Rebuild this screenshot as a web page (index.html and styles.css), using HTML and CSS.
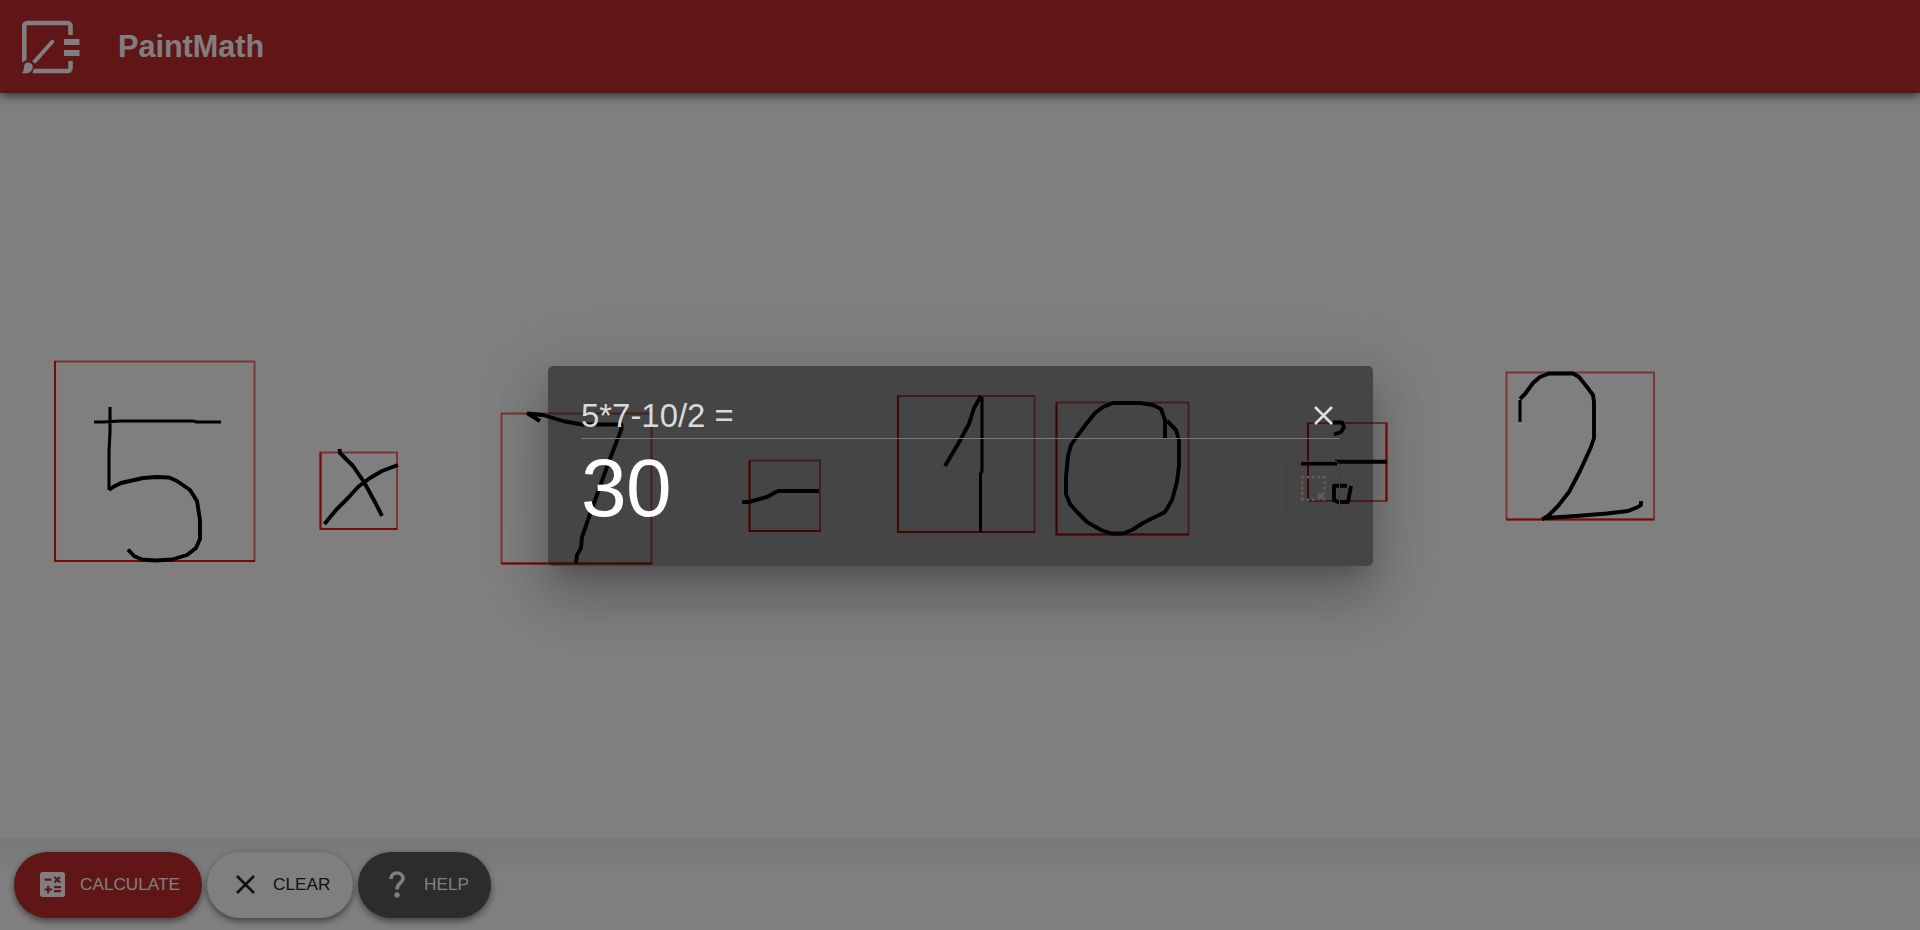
FILE: index.html
```html
<!DOCTYPE html>
<html lang="en">
<head>
<meta charset="utf-8">
<title>PaintMath</title>
<link rel="stylesheet" href="styles.css">
</head>
<body>
<div class="app">
  <header class="header">
    <svg class="logo" viewBox="20 18 62 56" width="62" height="56">
      <path class="logo-frame" d="M24.300 63V25a3 3 0 0 1 3-3H67.500a3 3 0 0 1 3 3V34M70.500 60V67a3 3 0 0 1-3 3H31"/>
      <path class="logo-fill" d="M64 38h15.500v6H64zM64 49h15.500v6H64z"/>
      <path class="logo-back" d="M20 62.500l7-4 8 5.500-3 9.500H20z"/>
      <path class="logo-fill" d="M51 39.300q2-1.200 3.200.4q.3 1.300-.5 2.300L36 62q-1.800.8-3.800-1.700z"/>
      <path class="logo-fill" d="M26 61.800q3.500-1.300 6 1.500 1.900 3.400-.6 6.400-3.500 4.200-9.800 2 2.500-1.600 2.300-5 .1-3.500 2.100-4.900z"/>
    </svg>
    <h1 class="title">PaintMath</h1>
  </header>
  <main class="board">
    <svg class="drawing" viewBox="0 93 1920 746" width="1920" height="746">
      <g class="bounds">
        <path d="M55 562V361.500H254.500V561H55M320.500 529V452.500H397V529H320.500M501.500 563.500V413.500H651.500V563.500H501.500M749.500 531V460.500H820V531H749.500M898 532V396H1034.500V532H898M1056.500 534.500V402.500H1188.500V534.500H1056.500M1308 501V423H1386.500V501H1308M1506.500 519.500V372.500H1654V519.500H1506.500"/>
        <path class="bounds-strong" d="M55 361V561H255M320.500 452V529H397M501 563.500H652M749.500 461V531H820.500M898 396V532H1035M1056.500 403V534.500H1189M1308 423V501M1386.500 423V501M1506 519.500H1654"/>
      </g>
      <g class="ink">
        <path class="thin" d="M94 422H103L120 421H193L197 422H221M110 407V432L109 451V490"/>
        <path d="M109 490L113 487 121 483 143 478 157 477 169 477.500 177 481 190 490 197 501 200 520 200 539 196 548 187 555 172 559.500 155 560.500 142 559.500 134 556 128 549.500"/>
        <path d="M339.500 449L340 453 353 466 364 482 376 504 382 516M324.500 524L336 510 348 498 358 487 370 478 382 471 398 465"/>
        <path d="M527 413L540 421M527 413.500L543 415 563 421 582 424.500H621.500V429L608 464 588 520 582 537 581 548 577 555 576 563M742 502H749L767 497 778 491H819"/>
        <path d="M945 466L958 444 969 424 974 408 981 396"/>
        <path class="thin" d="M982 397V471L980.500 474V532"/>
        <path d="M1165 439V420L1161 409 1153 405 1140 403H1113L1103 407 1095 413 1087 423 1078 435 1071 445 1068 456 1066 477 1066 494 1070 504 1077 512 1087 522 1101 530 1111 533.500H1123L1132 530 1143 523 1165 512 1172 500 1177 482 1179 465V440L1176 430 1167 421"/>
        <path d="M1333 422.500H1342L1344 427 1341 432 1334 434.500M1301 463.500H1337M1335 461.700H1387M1347 485.700H1334V500L1338 502 1348 502 1351 486"/>
        <path class="thin" d="M1520 422V400"/>
        <path d="M1520 399L1525 394 1533 383 1540 377 1549 373.500H1573L1579 377 1587 387 1593 395 1594 402V438L1591 447 1580 471 1569 492 1558 506 1548 516 1542 519.500M1545 518L1576 516 1607 513.500 1628 511 1638 507 1641 505V501"/>
      </g>
    </svg>
  </main>
  <footer class="toolbar">
    <button class="btn btn-calculate">
      <svg class="btn-icon" viewBox="0 0 25 25" width="25" height="25">
        <rect width="25" height="25" rx="2.700" fill="#fff"/>
        <path d="M4.500 7.600h7M14.500 5l5.500 5.500M20 5l-5.500 5.500M4.500 17.500h7.500M8.200 13.700v7.500M14 15.200h7M14 19.200h7" stroke="#c12d2d" stroke-width="2.200"/>
      </svg>
      <span>CALCULATE</span>
    </button>
    <button class="btn btn-clear">
      <svg class="btn-icon" viewBox="0 0 19 19" width="19" height="19"><path d="M1 1l17 17M18 1L1 18" stroke="#222" stroke-width="2.600"/></svg>
      <span>CLEAR</span>
    </button>
    <button class="btn btn-help">
      <svg class="btn-icon" viewBox="0 0 16 27" width="16" height="27"><path d="M2 8C2 4 4.600 2 8 2s6 2.400 6 5.500C14 12 8 12 8 18.500" fill="none" stroke="#fff" stroke-width="3.600"/><circle cx="8" cy="24" r="2.700" fill="#fff"/></svg>
      <span>HELP</span>
    </button>
  </footer>
</div>
<div class="overlay">
  <section class="dialog">
    <div class="dialog-head">
      <span>5*7-10/2 =</span>
      <svg class="close" viewBox="0 0 19 19" width="19" height="19"><path d="M1 1l17 17M18 1L1 18" stroke="#e0e0e0" stroke-width="2.500"/></svg>
    </div>
    <div class="dialog-body">
      <span class="result">30</span>
      <span class="copy"><svg viewBox="0 0 25 25" width="25" height="25"><path d="M1.300 0V25M0 1.300H25M23.700 0V17M0 23.700H16" fill="none" stroke="#605a5a" stroke-width="2.600" stroke-dasharray="2.700 2.700"/><path d="M17 17h8l-3 3 3 3-2 2-3-3-3 3z" fill="#605a5a"/></svg></span>
    </div>
  </section>
</div>
</body>
</html>
```
FILE: styles.css
```css
* { box-sizing: border-box; }
body { margin: 0; overflow: hidden; font-family: "Liberation Sans", Arial, sans-serif; }
.app { display: flex; flex-direction: column; height: 930px; background: #fff; }
.header { position: relative; z-index: 1; display: flex; align-items: center; gap: 36px; height: 93px; flex: none; padding: 0 20px; background: #c12d2d; box-shadow: 0 2px 10px rgba(0,0,0,.7); }
.logo { flex: none; }
.logo-frame { fill: none; stroke: #fff; stroke-width: 4.6; }
.logo-fill { fill: #fff; }
.logo-back { fill: #c12d2d; }
.title { margin: 0; padding-bottom: 1px; color: #fff; font-size: 30.6px; line-height: 36px; }
.board { flex: 1; min-height: 0; }
.drawing { display: block; }
.bounds { fill: none; stroke: #f00000; stroke-opacity: .6; stroke-width: 1.9; }
.bounds-strong { stroke-opacity: .8; stroke-width: 2.1; }
.ink { fill: none; stroke: #000; stroke-width: 3.9; stroke-linejoin: round; }
.thin { stroke-width: 3.1; }
.toolbar { display: flex; align-items: flex-start; gap: 5px; height: 91px; padding: 13px 14px; background: linear-gradient(#eff0ef, #fff 36px); }
.btn { display: flex; align-items: center; height: 66px; border: 0; border-radius: 33px; font: 17.2px "Liberation Sans", Arial, sans-serif; box-shadow: 0 3px 7px rgba(0,0,0,.5); }
.btn span { padding-bottom: 1px; }
.btn-icon { flex: none; }
.btn-calculate { width: 188px; padding: 0 0 0 26px; gap: 15px; background: #c12d2d; color: #fff; }
.btn-clear { width: 146px; padding: 0 0 0 29px; gap: 18px; background: #fff; color: #222; }
.btn-help { width: 133px; padding: 0 0 0 31px; gap: 19px; background: #5a5658; color: #fff; }
.btn-icon { position: relative; top: -.5px; }
.overlay { position: absolute; z-index: 2; inset: 0; display: flex; align-items: center; justify-content: center; background: rgba(0,0,0,.5); padding: 0 0 0 1px; }
.dialog { width: 825px; height: 200px; padding: 33px; margin-top: 2px; border-radius: 5px; color: #fff; background: rgba(0,0,0,.45); box-shadow: 0 15px 21px -10px rgba(0,0,0,.2), 0 33px 52px 4px rgba(0,0,0,.15), 0 12px 63px 11px rgba(0,0,0,.13); }
.dialog-head { display: flex; justify-content: space-between; align-items: center; height: 40px; padding: 0 7px 6px 0; border-bottom: 1px solid #777; color: #dadada; font-size: 32.9px; line-height: 33px; }
.dialog-body { display: flex; justify-content: space-between; align-items: flex-start; }
.result { padding-top: 1px; font-size: 82px; line-height: 95px; letter-spacing: -.5px; }
.copy { display: flex; align-items: center; justify-content: center; width: 54px; height: 54px; margin-top: 22px; border: 1px solid #404040; border-radius: 5px; }
```
